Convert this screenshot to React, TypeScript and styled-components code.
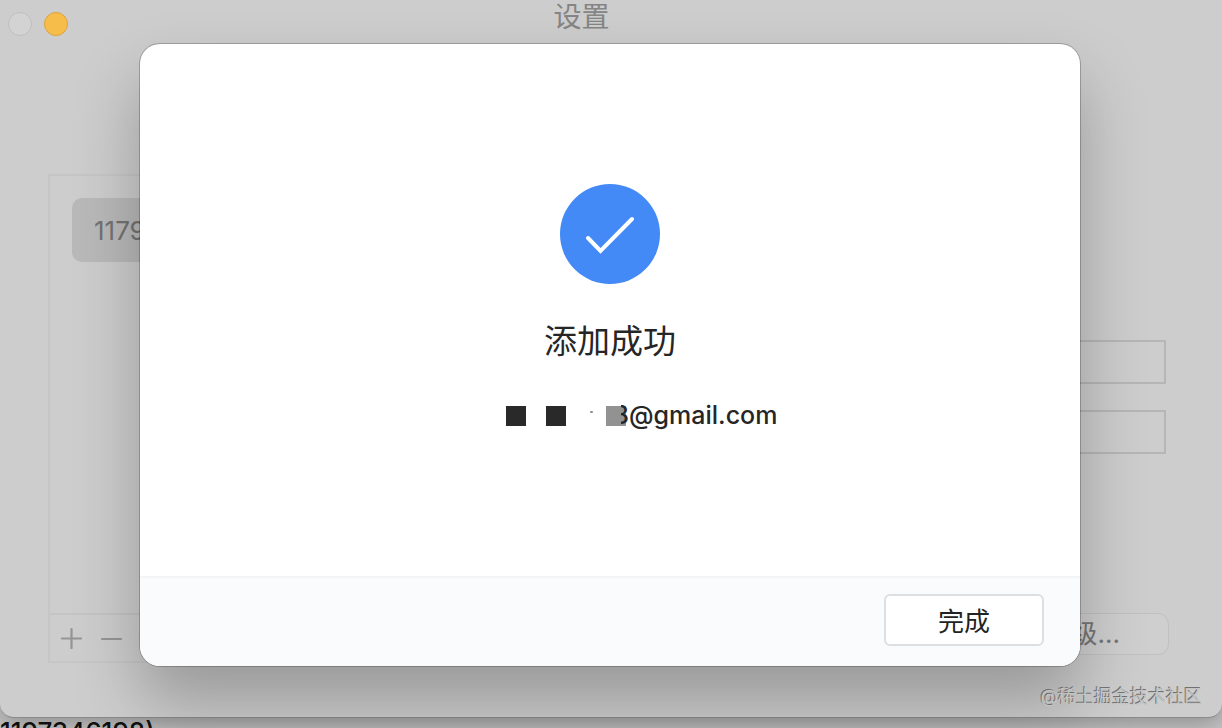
import React from "react";
import styled, { createGlobalStyle } from "styled-components";

const GlobalStyle = createGlobalStyle`
  * { box-sizing: border-box; }
  html, body, #root { height: 100%; }
  body {
    margin: 0;
    overflow: hidden;
    background: #c4c4c4;
    font-family: Inter, "Noto Sans CJK SC", sans-serif;
  }
  button, input { font: inherit; }
`;

const Screen = styled.div`
  position: relative;
  height: 100%;
  display: flex;
  flex-direction: column;
  overflow: hidden;
`;

const Window = styled.main`
  flex: 1;
  min-height: 0;
  display: flex;
  flex-direction: column;
  background: #cdcdcd;
  border-bottom: 1px solid #8a8a8a;
  border-radius: 0 0 14px 14px;
  box-shadow: 0 4px 24px rgba(0, 0, 0, 0.3);
`;

const TitleBar = styled.header`
  display: grid;
  grid-template-columns: 1fr auto 1fr;
  align-items: start;
  height: 174px;
  padding: 0 67px 0 8px;
`;

const Lights = styled.div`
  display: flex;
  gap: 12px;
  padding-top: 12px;
`;

const Light = styled.button<{ $fill: string; $edge: string }>`
  width: 24px;
  height: 24px;
  padding: 0;
  border: 1px solid ${(p) => p.$edge};
  border-radius: 50%;
  background: ${(p) => p.$fill};
`;

const WindowTitle = styled.h1`
  margin: 0;
  font-size: 28px;
  line-height: 34px;
  font-weight: 400;
  color: #858585;
`;

const Panes = styled.div`
  flex: 1;
  display: flex;
  justify-content: space-between;
  padding: 0 53px 54px 48px;
`;

const AccountPane = styled.section`
  display: flex;
  flex-direction: column;
  width: 300px;
  border: 2px solid #c6c6c6;
`;

const AccountList = styled.ul`
  flex: 1;
  margin: 0;
  padding: 22px;
  list-style: none;
`;

const Account = styled.li`
  height: 64px;
  padding: 0 22px;
  border-radius: 10px;
  background: #b9b9b9;
  color: #737373;
  font-size: 26px;
  line-height: 66px;
`;

const ListTools = styled.div`
  display: flex;
  gap: 16px;
  height: 48px;
  padding: 10px;
  border-top: 2px solid #c4c4c4;
`;

const ToolButton = styled.button`
  display: flex;
  width: 24px;
  height: 24px;
  padding: 0;
  border: 0;
  background: none;
  color: #959595;
`;

const Details = styled.form`
  display: flex;
  flex-direction: column;
  align-items: flex-end;
  gap: 26px;
  padding: 166px 3px 0 0;
`;

const Field = styled.input`
  width: 420px;
  height: 44px;
  padding: 0 10px;
  border: 2px solid #b6b6b6;
  background: transparent;
`;

const AdvancedButton = styled.button`
  width: 160px;
  height: 42px;
  margin: auto -3px 8px 0;
  padding: 0 48px 0 0;
  border: 1px solid #c0c0c0;
  border-radius: 11px;
  background: #cfcfcf;
  color: #777777;
  font-size: 26px;
  line-height: 38px;
  text-align: right;
`;

const Behind = styled.div`
  display: flex;
  height: 10px;
  overflow: hidden;
`;

const BehindCell = styled.div`
  width: 230px;
  color: #101010;
  font-size: 26px;
  line-height: 28px;
  font-weight: 500;
  white-space: nowrap;
`;

const Dialog = styled.section`
  position: absolute;
  top: 44px;
  left: 140px;
  right: 142px;
  bottom: 62px;
  display: flex;
  flex-direction: column;
  overflow: hidden;
  border-radius: 20px;
  background: #ffffff;
  box-shadow: 0 0 0 1px rgba(0, 0, 0, 0.22), 0 36px 66px rgba(0, 0, 0, 0.26);
`;

const DialogBody = styled.div`
  flex: 1;
  display: flex;
  flex-direction: column;
  align-items: center;
  padding-top: 140px;
  color: #262626;
`;

const DialogTitle = styled.h2`
  margin: 32px 0 28px;
  font-size: 33px;
  line-height: 50px;
  font-weight: 400;
`;

const Email = styled.p`
  display: flex;
  align-items: center;
  width: 334px;
  margin: 0;
  padding-left: 63px;
  font-size: 25px;
  line-height: 42px;
  font-weight: 500;
`;

const Block = styled.span<{ $faded?: boolean }>`
  flex: none;
  width: 20px;
  height: 20px;
  margin: 2px 20px 0 0;
  background: ${(p) => (p.$faded ? "#929292" : "#292929")};
`;

const Speck = styled.span`
  flex: none;
  width: 3px;
  height: 2px;
  margin: -6px 13px 0 4px;
  border-radius: 1px;
  background: #8c8c8c;
`;

const HalfDigit = styled.span`
  flex: none;
  display: flex;
  justify-content: flex-end;
  width: 8px;
  margin-left: -25px;
  overflow: hidden;
`;

const DialogFooter = styled.footer`
  display: flex;
  justify-content: flex-end;
  height: 90px;
  padding: 16px 36px;
  border-top: 2px solid #f2f4f5;
  background: #fafbfd;
`;

const DoneButton = styled.button`
  width: 160px;
  height: 52px;
  padding: 4px 0 0;
  border: 2px solid #dddfe1;
  border-radius: 6px;
  background: #ffffff;
  color: #222222;
  font-size: 26px;
  line-height: 44px;
`;

const Watermark = styled.div`
  position: absolute;
  right: 20px;
  bottom: 18px;
  color: #c4c4c4;
  font-size: 18px;
  line-height: 26px;
  text-shadow: -1px -1px 0 #707070;
`;

export default function App() {
  return (
    <>
      <GlobalStyle />
      <Screen>
        <Window>
          <TitleBar>
            <Lights>
              <Light $fill="#d3d3d3" $edge="#c0c0c0" aria-label="关闭" />
              <Light $fill="#f6bd4b" $edge="#dca23c" aria-label="最小化" />
            </Lights>
            <WindowTitle>设置</WindowTitle>
          </TitleBar>
          <Panes>
            <AccountPane>
              <AccountList>
                <Account>1179</Account>
              </AccountList>
              <ListTools>
                <ToolButton aria-label="添加">
                  <svg width="24" height="24" viewBox="0 0 24 24" stroke="currentColor" strokeWidth="2.200" strokeLinecap="round">
                    <path d="M2 13.500H21M11.500 4V23" />
                  </svg>
                </ToolButton>
                <ToolButton aria-label="移除">
                  <svg width="24" height="24" viewBox="0 0 24 24" stroke="currentColor" strokeWidth="2.200" strokeLinecap="round">
                    <path d="M2 14H21" />
                  </svg>
                </ToolButton>
              </ListTools>
            </AccountPane>
            <Details>
              <Field aria-label="账户" />
              <Field aria-label="描述" />
              <AdvancedButton type="button">高级...</AdvancedButton>
            </Details>
          </Panes>
        </Window>
        <Behind>
          <BehindCell>1197346198)</BehindCell>
        </Behind>
        <Dialog role="dialog" aria-labelledby="result">
          <DialogBody>
            <svg width="100" height="100" viewBox="0 0 100 100" fill="none">
              <circle cx="50" cy="50" r="50" fill="#438af7" />
              <path d="M28 54L40.500 67L72 35" stroke="#ffffff" strokeWidth="4" strokeLinecap="round" strokeLinejoin="miter" />
            </svg>
            <DialogTitle id="result">添加成功</DialogTitle>
            <Email>
              <Block />
              <Block />
              <Speck />
              <Block $faded />
              <HalfDigit>8</HalfDigit>
              <span>@gmail.com</span>
            </Email>
          </DialogBody>
          <DialogFooter>
            <DoneButton>完成</DoneButton>
          </DialogFooter>
        </Dialog>
        <Watermark>@稀土掘金技术社区</Watermark>
      </Screen>
    </>
  );
}
